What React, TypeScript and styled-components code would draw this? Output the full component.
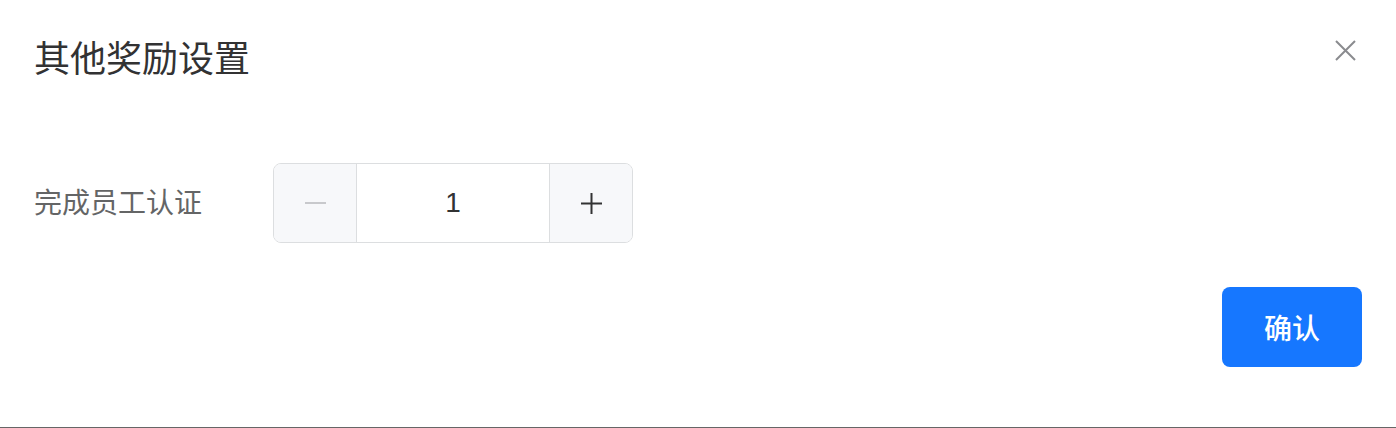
import styled, { createGlobalStyle } from "styled-components";

const GlobalStyle = createGlobalStyle`
  body {
    margin: 0;
    background: #fff;
    font-family: "Noto Sans CJK SC", "Noto Sans", sans-serif;
  }
`;

const Dialog = styled.div`
  width: 1396px;
  height: 428px;
  box-sizing: border-box;
  padding: 31px 34px 0;
  border-bottom: 1px solid #666;
  background: #fff;
`;

const Header = styled.div`
  display: flex;
  align-items: center;
  justify-content: space-between;
  height: 50px;
`;

const Title = styled.h2`
  margin: 0;
  font-size: 36px;
  line-height: 50px;
  font-weight: 400;
  color: #323233;
`;

const CloseButton = styled.button`
  width: 22px;
  height: 22px;
  padding: 0;
  margin: -12px 6px 0 0;
  border: none;
  background: none;
  color: #8a8b8f;
  cursor: pointer;
  display: flex;
  align-items: center;
  justify-content: center;
`;

const Row = styled.div`
  display: flex;
  align-items: center;
  margin-top: 82px;
`;

const Label = styled.div`
  width: 239px;
  font-size: 28px;
  line-height: 40px;
  margin-top: -5px;
  color: #646566;
`;

const Stepper = styled.div`
  display: flex;
  height: 80px;
  border: 1px solid #dcdee0;
  border-radius: 8px;
  overflow: hidden;
  box-sizing: border-box;
`;

const StepButton = styled.button<{ $disabled?: boolean }>`
  width: 82px;
  height: 100%;
  padding: 0;
  border: none;
  background: #f7f8fa;
  display: flex;
  align-items: center;
  justify-content: center;
  color: ${(p) => (p.$disabled ? "#c8c9cc" : "#323233")};
  cursor: ${(p) => (p.$disabled ? "not-allowed" : "pointer")};
`;

const Input = styled.div`
  width: 192px;
  border-left: 1px solid #dcdee0;
  border-right: 1px solid #dcdee0;
  display: flex;
  align-items: center;
  justify-content: center;
  font-family: "Liberation Sans", Arial, sans-serif;
  font-size: 28px;
  color: #323233;
  background: #fff;
`;

const Footer = styled.div`
  display: flex;
  justify-content: flex-end;
  margin-top: 44px;
`;

const ConfirmButton = styled.button`
  width: 140px;
  height: 80px;
  border: none;
  border-radius: 8px;
  background: #1677ff;
  color: #fff;
  font-family: inherit;
  font-size: 28px;
  font-weight: 500;
  cursor: pointer;
`;

export default function App() {
  return (
    <>
      <GlobalStyle />
      <Dialog>
        <Header>
          <Title>其他奖励设置</Title>
          <CloseButton aria-label="关闭">
            <svg width="21" height="21" viewBox="0 0 21 21">
              <path d="M1 1L20 20M20 1L1 20" stroke="currentColor" strokeWidth="2" />
            </svg>
          </CloseButton>
        </Header>

        <Row>
          <Label>完成员工认证</Label>
          <Stepper>
            <StepButton $disabled>
              <svg width="21" height="2" viewBox="0 0 21 2">
                <rect width="21" height="2" fill="currentColor" />
              </svg>
            </StepButton>
            <Input>1</Input>
            <StepButton>
              <svg width="21" height="21" viewBox="0 0 21 21">
                <rect y="9.5" width="21" height="2" fill="currentColor" />
                <rect x="9.5" width="2" height="21" fill="currentColor" />
              </svg>
            </StepButton>
          </Stepper>
        </Row>

        <Footer>
          <ConfirmButton>确认</ConfirmButton>
        </Footer>
      </Dialog>
    </>
  );
}
